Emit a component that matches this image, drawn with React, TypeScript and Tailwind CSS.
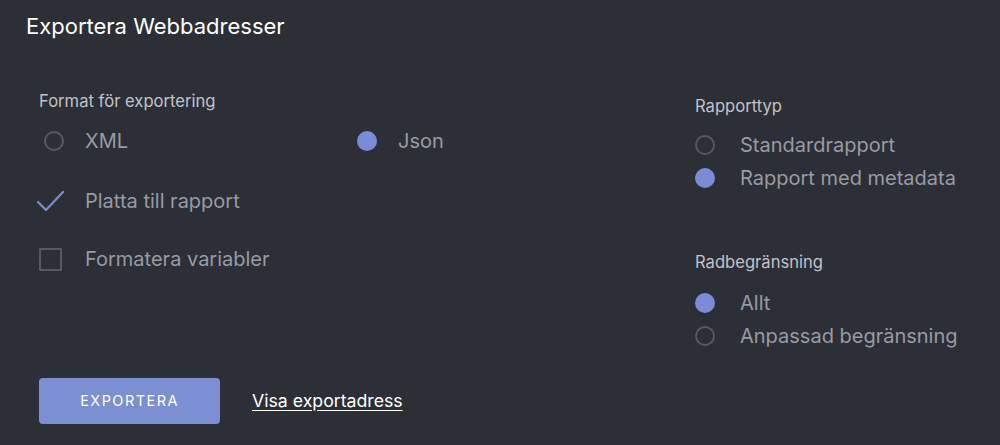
import React from "react";

const font = { fontFamily: "Inter, 'Noto Sans', 'Liberation Sans', sans-serif" };

function Radio({ checked }: { checked?: boolean }) {
  return checked ? (
    <span className="block w-[20px] h-[20px] rounded-full bg-[#7b8cd6]" />
  ) : (
    <span className="block w-[20px] h-[20px] rounded-full border-2 border-[#56595f]" />
  );
}

function Option({ checked, label }: { checked?: boolean; label: string }) {
  return (
    <div className="flex items-center h-[33px]">
      <span className="w-[20px] flex justify-center">
        <Radio checked={checked} />
      </span>
      <span className="ml-[25px] text-[20px] leading-[24px] text-[#979ba3]">{label}</span>
    </div>
  );
}

export default function App() {
  return (
    <div className="w-[1000px] h-[445px] bg-[#2c2f36] overflow-hidden" style={font}>
      <div className="pl-[26px] pt-[11px] text-[22px] text-white leading-[30px]">Exportera Webbadresser</div>
      <div className="flex">
        <div className="w-[656px] pl-[39px]">
          <div className="mt-[50px] text-[16.6px] text-[#c0c3c8] leading-[20px]">Format för exportering</div>
          <div className="flex mt-[10px] h-[40px] items-center">
            <div className="w-[318px] flex items-center">
              <span className="ml-[5px]"><Radio /></span>
              <span className="ml-[21px] text-[20px] text-[#979ba3]">XML</span>
            </div>
            <div className="flex items-center">
              <Radio checked />
              <span className="ml-[21px] text-[20px] text-[#979ba3]">Json</span>
            </div>
          </div>
          <div className="flex items-center h-[40px] mt-[20px]">
            <svg width="30" height="24" viewBox="0 0 30 24" className="-ml-[3px]">
              <path d="M2 13 L10 21 L27 3" fill="none" stroke="#7b8cd6" strokeWidth="2.2" strokeLinecap="round" strokeLinejoin="round" />
            </svg>
            <span className="ml-[19px] text-[20px] text-[#979ba3]">Platta till rapport</span>
          </div>
          <div className="flex items-center h-[40px] mt-[18px]">
            <span className="block w-[23px] h-[23px] border-2 border-[#56595f] rounded-[1px]" />
            <span className="ml-[23px] text-[20px] text-[#979ba3]">Formatera variabler</span>
          </div>
          <div className="flex items-center mt-[99px]">
            <button className="w-[181px] h-[46px] rounded-[4px] bg-[#7d8fd3] text-white text-[14.5px] tracking-[0.1em]">EXPORTERA</button>
            <a className="ml-[32px] text-[17.7px] text-white underline underline-offset-[3px]">Visa exportadress</a>
          </div>
        </div>
        <div className="pl-[39px]">
          <div className="mt-[55px] text-[16.6px] text-[#c0c3c8] leading-[20px]">Rapporttyp</div>
          <div className="mt-[12px]">
            <Option label="Standardrapport" />
            <Option checked label="Rapport med metadata" />
          </div>
          <div className="mt-[58px] text-[16.6px] text-[#c0c3c8] leading-[20px]">Radbegränsning</div>
          <div className="mt-[14px]">
            <Option checked label="Allt" />
            <Option label="Anpassad begränsning" />
          </div>
        </div>
      </div>
    </div>
  );
}
